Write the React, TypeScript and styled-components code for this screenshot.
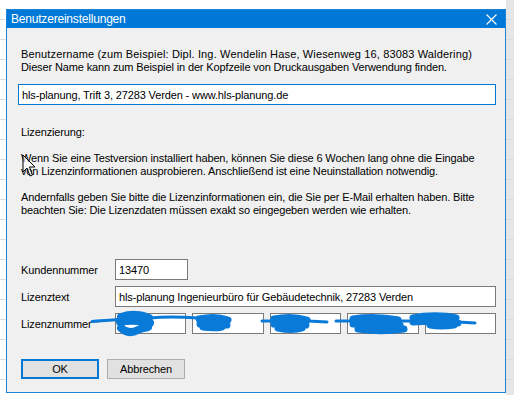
import { FC } from "react";
import styled, { createGlobalStyle } from "styled-components";

const BLUE = "#0078d7";
const FONT = `"Liberation Sans", Arial, sans-serif`;

const Global = createGlobalStyle`
  html, body {
    margin: 0;
    padding: 0;
    width: 514px;
    height: 395px;
    overflow: hidden;
  }
  body {
    font-family: ${FONT};
    font-size: 11px;
    letter-spacing: -0.13px;
    color: #000;
  }
`;

const Desktop = styled.div`
  position: relative;
  width: 514px;
  height: 395px;
  box-sizing: border-box;
  padding: 9px 0 0 6px;
  background-color: #fff;
  background-image:
    repeating-linear-gradient(to bottom, transparent 0 19px, #dcdcdc 19px 20px),
    linear-gradient(to right, transparent 0 506px, #e6e6e6 506px);
`;

const Window = styled.div`
  width: 500px;
  height: 384px;
  box-sizing: border-box;
  border: 1px solid #1c84d8;
  background: #f0f0f0;
  display: flex;
  flex-direction: column;
`;

const TitleBar = styled.div`
  height: 18px;
  background: ${BLUE};
  display: flex;
  align-items: center;
  justify-content: space-between;
  padding: 0 8px 0 4px;
`;

const Title = styled.span`
  color: #fff;
  font-size: 12px;
  letter-spacing: -0.2px;
`;

const Content = styled.div`
  flex: 1;
  display: flex;
  flex-direction: column;
  padding: 20px 9px 0 11px;
`;

const Para = styled.p<{ $gap?: number }>`
  margin: ${(p) => p.$gap ?? 0}px 0 0 3px;
  line-height: 13px;
  white-space: nowrap;
`;

const Wide = styled.span`
  letter-spacing: 0.15px;
`;

const Field = styled.div<{ $focused?: boolean; $width?: number }>`
  box-sizing: border-box;
  height: 21px;
  width: ${(p) => (p.$width ? `${p.$width}px` : "auto")};
  background: #fff;
  border: 1px solid ${(p) => (p.$focused ? BLUE : "#7a7a7a")};
  padding: 0 3px;
  display: flex;
  align-items: center;
  white-space: nowrap;
  overflow: hidden;
`;

const NameField = styled(Field)`
  margin-top: 10px;
`;

const Form = styled.div`
  margin-top: 42px;
  display: grid;
  grid-template-columns: 97px 1fr;
  row-gap: 6px;
  align-items: center;
`;

const Label = styled.span`
  padding-left: 3px;
`;

const Segments = styled.div`
  display: grid;
  grid-template-columns: repeat(5, 1fr);
  gap: 6px;
`;

const ButtonRow = styled.div`
  margin: 25px 0 0 3px;
  display: flex;
  gap: 8px;
`;

const Button = styled.div<{ $default?: boolean }>`
  box-sizing: border-box;
  width: 78px;
  height: 20px;
  background: #e1e1e1;
  border: ${(p) => (p.$default ? `2px solid ${BLUE}` : "1px solid #adadad")};
  display: flex;
  align-items: center;
  justify-content: center;
`;

const Overlay = styled.svg`
  position: absolute;
  left: 0;
  top: 0;
  pointer-events: none;
`;

const CloseIcon: FC = () => (
  <svg width="11" height="11" viewBox="0 0 11 11">
    <path d="M0.5 0.5 L10.5 10.5 M10.5 0.5 L0.5 10.5" stroke="#fff" strokeWidth="1.1" />
  </svg>
);

const SCRIBBLE = "#0a7ad8";

export default function App() {
  return (
    <>
      <Global />
      <Desktop>
        <Window>
          <TitleBar>
            <Title>Benutzereinstellungen</Title>
            <CloseIcon />
          </TitleBar>
          <Content>
            <Para>
              <Wide>Benutzername (zum Beispiel: Dipl. Ing. Wendelin Hase, Wiesenweg 16, 83083 Waldering)</Wide>
              <br />
              Dieser Name kann zum Beispiel in der Kopfzeile von Druckausgaben Verwendung finden.
            </Para>
            <NameField $focused>hls-planung, Trift 3, 27283 Verden - www.hls-planung.de</NameField>
            <Para $gap={21}>Lizenzierung:</Para>
            <Para $gap={13}>
              Wenn Sie eine Testversion installiert haben, können Sie diese 6 Wochen lang ohne die Eingabe
              <br />
              von Lizenzinformationen ausprobieren. Anschließend ist eine Neuinstallation notwendig.
            </Para>
            <Para $gap={13}>
              Andernfalls geben Sie bitte die Lizenzinformationen ein, die Sie per E-Mail erhalten haben. Bitte
              <br />
              beachten Sie: Die Lizenzdaten müssen exakt so eingegeben werden wie erhalten.
            </Para>
            <Form>
              <Label>Kundennummer</Label>
              <Field $width={73}>13470</Field>
              <Label>Lizenztext</Label>
              <Field>hls-planung Ingenieurbüro für Gebäudetechnik, 27283 Verden</Field>
              <Label>Lizenznummer</Label>
              <Segments>
                <Field />
                <Field />
                <Field />
                <Field />
                <Field />
              </Segments>
            </Form>
            <ButtonRow>
              <Button $default>OK</Button>
              <Button>Abbrechen</Button>
            </ButtonRow>
          </Content>
        </Window>
        <Overlay width="514" height="395" viewBox="0 0 514 395">
          <g stroke={SCRIBBLE} fill="none" strokeLinecap="round" strokeLinejoin="round">
            <path d="M92 321.5 C100 321 110 320 118 319.5" strokeWidth="3" />
            <path d="M121 317 C130 314 142 314 149 318 M120 322 C130 320 142 321 150 323 M121 328 C126 333 132 333 138 330 C142 328 146 328 148 327" strokeWidth="8" />
            <path d="M150 318 C165 316.5 182 317 198 318" strokeWidth="3" />
            <path d="M199 319 C208 317 220 317 228 320 M200 324 C209 323 219 324 227 325 M203 327 C210 328 217 328 222 327" strokeWidth="7" />
            <path d="M262 321 L272 321" strokeWidth="3" />
            <path d="M274 319 C284 317 297 317 307 320 M274 324 C285 322 297 324 306 325 M278 328 C287 330 296 330 302 328" strokeWidth="7" />
            <path d="M308 321 L327 322" strokeWidth="3" />
            <path d="M336 321 L350 321" strokeWidth="3" />
            <path d="M353 319 C366 317 385 317 398 320 M353 324 C367 323 385 324 400 325 M358 329 C372 331 390 331 404 329" strokeWidth="7" />
            <path d="M400 321 L410 321" strokeWidth="3" />
            <path d="M413 318 C426 315 444 315 456 318 M413 322 C426 321 444 321 458 323 M430 325 C440 327 448 326 454 325" strokeWidth="7" />
            <path d="M458 322 L475 323" strokeWidth="3" />
          </g>
          <path
            d="M23 155 L23 172 L27 168 L30 176 L32.5 175 L29.5 167 L35 167 Z"
            fill="#fff"
            fillOpacity="0.6"
            stroke="#000"
            strokeWidth="1"
          />
        </Overlay>
      </Desktop>
    </>
  );
}
